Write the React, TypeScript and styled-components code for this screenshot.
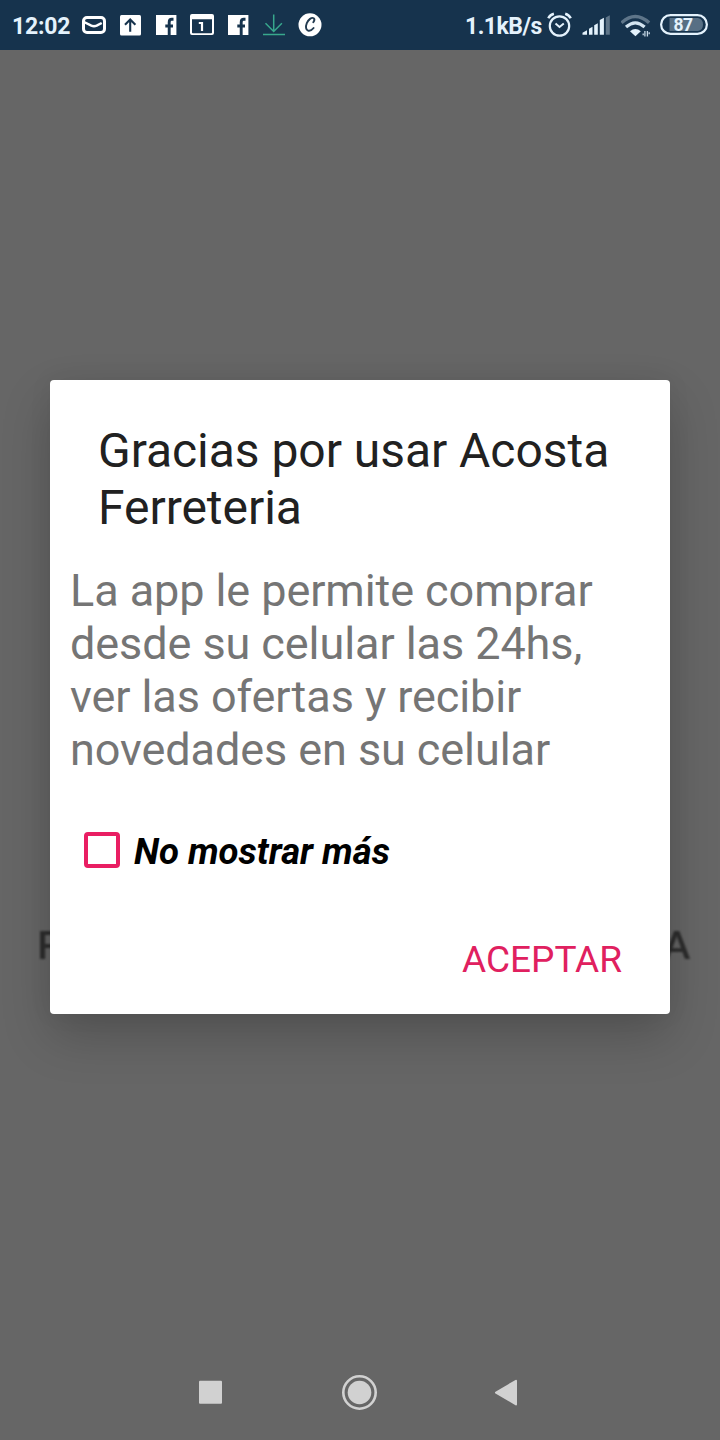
import React from 'react';
import styled, { createGlobalStyle } from 'styled-components';

const GlobalStyle = createGlobalStyle`
  * { box-sizing: border-box; }
  body { margin: 0; background: #666; font-family: Roboto, sans-serif; }
`;

const Screen = styled.div`
  width: 720px;
  height: 1440px;
  display: grid;
  grid-template-rows: 50px 1294px 96px;
  background: #666;
  overflow: hidden;
`;

const StatusBar = styled.header`
  display: flex;
  align-items: center;
  justify-content: space-between;
  padding: 0 12px;
  background: #16334d;
  color: #e4f2fc;
`;

const StatusGroup = styled.div`
  display: flex;
  align-items: center;
  height: 50px;
`;

const StatusText = styled.span<{ $width: number; $spacing?: string }>`
  width: ${(p) => p.$width}px;
  padding-top: 3px;
  font-size: 23px;
  line-height: 28px;
  font-weight: 700;
  white-space: nowrap;
  letter-spacing: ${(p) => p.$spacing ?? '-0.2px'};
`;

const Glyph = styled.svg<{ $gap?: number }>`
  display: block;
  flex: none;
  margin-left: ${(p) => p.$gap ?? 0}px;
`;

const Stage = styled.main`
  display: grid;
  grid-template: 1fr / 1fr;
`;

const Splash = styled.div`
  grid-area: 1 / 1;
  display: flex;
  align-items: flex-start;
  justify-content: space-between;
  padding: 872px 30px 0 37px;
  color: #2d2d2d;
  font: 700 38px/44px Lato, sans-serif;
  filter: blur(1.2px);
`;

const Dialog = styled.section`
  grid-area: 1 / 1;
  position: relative;
  margin: 330px 50px 0;
  height: 634px;
  display: flex;
  flex-direction: column;
  background: #fff;
  border-radius: 4px;
  box-shadow: 0 22px 50px rgba(0, 0, 0, 0.2), 0 0 24px rgba(0, 0, 0, 0.06);
`;

const Title = styled.h1`
  margin: 0;
  padding: 42px 40px 0 48px;
  color: #212121;
  font-size: 48px;
  line-height: 57px;
  font-weight: 400;
  letter-spacing: -0.04px;
`;

const Message = styled.p`
  margin: 0;
  padding: 28px 20px 0;
  color: #757575;
  font-size: 45px;
  line-height: 53px;
  letter-spacing: -0.08px;
  white-space: nowrap;
`;

const Option = styled.label`
  display: flex;
  align-items: center;
  gap: 14px;
  height: 52px;
  margin: 48px 0 0 34px;
  color: #000;
  font-size: 36.5px;
  font-weight: 700;
  font-style: italic;
`;

const OptionText = styled.span`
  padding-top: 3px;
`;

const Box = styled.span`
  width: 36px;
  height: 36px;
  border: 4px solid #e91e63;
  border-radius: 4px;
`;

const Actions = styled.div`
  display: flex;
  justify-content: flex-end;
  padding: 62px 48px 0 0;
`;

const Accept = styled.button`
  padding: 0;
  border: 0;
  background: none;
  color: #e0205f;
  font: 400 37px/44px Roboto, sans-serif;
`;

const NavBar = styled.nav`
  display: grid;
  grid-template-columns: repeat(3, 148px);
  justify-content: center;
  justify-items: center;
  align-items: center;
`;

const FacebookIcon = () => (
  <Glyph width="36" height="50" viewBox="0 0 36 50" fill="none">
    <rect x="8" y="15" width="20.4" height="20" fill="#fff" />
    <path d="M21.2 35V22.2q0-2.9 2.6-2.9h1.7M17.3 26h7.7" stroke="#16334d" strokeWidth="2.9" />
  </Glyph>
);

const NotificationIcons = () => (
  <>
    <Glyph width="36" height="50" viewBox="0 0 36 50">
      <rect x="7.5" y="17.5" width="21" height="15" rx="3.5" fill="none" stroke="#fff" strokeWidth="3" />
      <path d="M7 21.5l8.3 4.2q2.7 1.1 5.4 0l5-2.7" fill="none" stroke="#fff" strokeWidth="2.5" />
    </Glyph>
    <Glyph width="36" height="50" viewBox="0 0 36 50">
      <rect x="8" y="15" width="21" height="20.5" rx="1.5" fill="#fff" />
      <path d="M18.2 31.8V20M13 24.8l5.2-5.3 5.2 5.3" fill="none" stroke="#16334d" strokeWidth="2.1" />
    </Glyph>
    <FacebookIcon />
    <Glyph width="36" height="50" viewBox="0 0 36 50">
      <path fill="#fff" fillRule="evenodd" d="M8 14h20q2 0 2 2v17q0 2-2 2H8q-2 0-2-2V16q0-2 2-2zM8 19.3v13.2q0 .8.8.8h18.4q.8 0 .8-.8V19.3z" />
      <path d="M14.8 23h3.2v8" fill="none" stroke="#fff" strokeWidth="2.2" />
    </Glyph>
    <FacebookIcon />
    <Glyph width="36" height="50" viewBox="0 0 36 50">
      <path d="M17.7 14.5V32M9.5 23.3l8.2 8.2 8.2-8.2M7 34.5h22" fill="none" stroke="#38a88d" strokeWidth="1.5" />
    </Glyph>
    <Glyph width="36" height="50" viewBox="0 0 36 50">
      <circle cx="18" cy="24.8" r="11.5" fill="#fff" />
      <path d="M21.3 22.2q2-2.8.4-4c-2.1-1.2-5.4 1.3-6.9 5-1.4 3.6-.9 6.8 1.2 7.4 1.9.6 4-.6 5.6-2.6" fill="none" stroke="#233b50" strokeWidth="1.9" strokeLinecap="round" />
    </Glyph>
  </>
);

const AlarmIcon = () => (
  <Glyph width="28" height="50" viewBox="0 0 28 50" fill="none" stroke="#e4f2fc">
    <circle cx="14.5" cy="26" r="9.7" strokeWidth="2.2" />
    <path d="M10.5 23.5l4 3.5 4.3-3.5" strokeWidth="2" />
    <path d="M3.3 18.3q1.8-3.5 5.6-4.5M20.2 13.8q4 1.1 5.5 4.5" strokeWidth="2.5" />
  </Glyph>
);

const SignalIcon = () => (
  <Glyph $gap={9} width="28" height="50" viewBox="0 0 28 50" fill="#e4f2fc">
    <path d="M.5 34.7v-1.9l4.5-2.6v4.5zM7 28.8l3.5-2v7.9H7zM12.2 25.3l3.6-2v11.4h-3.6zM17.8 20l4.1-2.3v17h-4.1z" />
    <path d="M23.8 17.5l4-2.3v19.5h-4z" fill="#5e7589" />
  </Glyph>
);

const WifiIcon = () => (
  <Glyph $gap={11} width="30" height="50" viewBox="0 0 30 50" fill="none">
    <path d="M.5 22.7q13.8-12.4 27.6 0" stroke="#5e7589" strokeWidth="3.4" />
    <path d="M5 27q9.3-8.4 18.6 0" stroke="#d3e4f0" strokeWidth="3.2" />
    <path d="M9 31.3q5.4-4.5 10.8 0l-5.4 5z" fill="#e4f2fc" />
    <path d="M23.9 31v5.4M22.2 33.5v1.8M26.4 31v5.4M28.2 32.3v2" stroke="#c5d7e5" strokeWidth="1.3" />
  </Glyph>
);

const BatteryIcon = () => (
  <Glyph $gap={9} width="48" height="50" viewBox="0 0 48 50">
    <rect x="1.1" y="15.1" width="45.8" height="18.8" rx="9.4" fill="none" stroke="#e4f2fc" strokeWidth="2.2" />
    <path d="M9.5 18H38q5 1 5 6.5T38 31H9.5z" fill="#576f84" />
    <text x="23" y="31" textAnchor="middle" fill="#e4f2fc" fontFamily="Roboto, sans-serif" fontWeight="700" fontSize="17.5" letterSpacing="-0.6">87</text>
  </Glyph>
);

export default function App() {
  return (
    <>
      <GlobalStyle />
      <Screen>
        <StatusBar>
          <StatusGroup>
            <StatusText $width={64}>12:02</StatusText>
            <NotificationIcons />
          </StatusGroup>
          <StatusGroup>
            <StatusText $width={80} $spacing="-0.5px">1.1kB/s</StatusText>
            <AlarmIcon />
            <SignalIcon />
            <WifiIcon />
            <BatteryIcon />
          </StatusGroup>
        </StatusBar>
        <Stage>
          <Splash>
            <span>F</span>
            <span>A</span>
          </Splash>
          <Dialog role="dialog">
            <Title>Gracias por usar Acosta Ferreteria</Title>
            <Message>
              La app le permite comprar<br />
              desde su celular las 24hs,<br />
              ver las ofertas y recibir<br />
              novedades en su celular
            </Message>
            <Option>
              <Box />
              <OptionText>No mostrar más</OptionText>
            </Option>
            <Actions>
              <Accept>ACEPTAR</Accept>
            </Actions>
          </Dialog>
        </Stage>
        <NavBar>
          <svg width="36" height="36" viewBox="0 0 36 36" fill="#d1d1d1">
            <rect x="5" y="6.8" width="23" height="23" rx="1" />
          </svg>
          <svg width="36" height="36" viewBox="0 0 36 36" fill="#d1d1d1">
            <circle cx="17.5" cy="18.5" r="11.8" />
            <circle cx="17.5" cy="18.5" r="16.2" fill="none" stroke="#d1d1d1" strokeWidth="2.6" />
          </svg>
          <svg width="36" height="36" viewBox="0 0 36 36" fill="#d1d1d1" stroke="#d1d1d1" strokeWidth="2" strokeLinejoin="round">
            <path d="M6 18.6L26 6.8v23.6z" />
          </svg>
        </NavBar>
      </Screen>
    </>
  );
}
